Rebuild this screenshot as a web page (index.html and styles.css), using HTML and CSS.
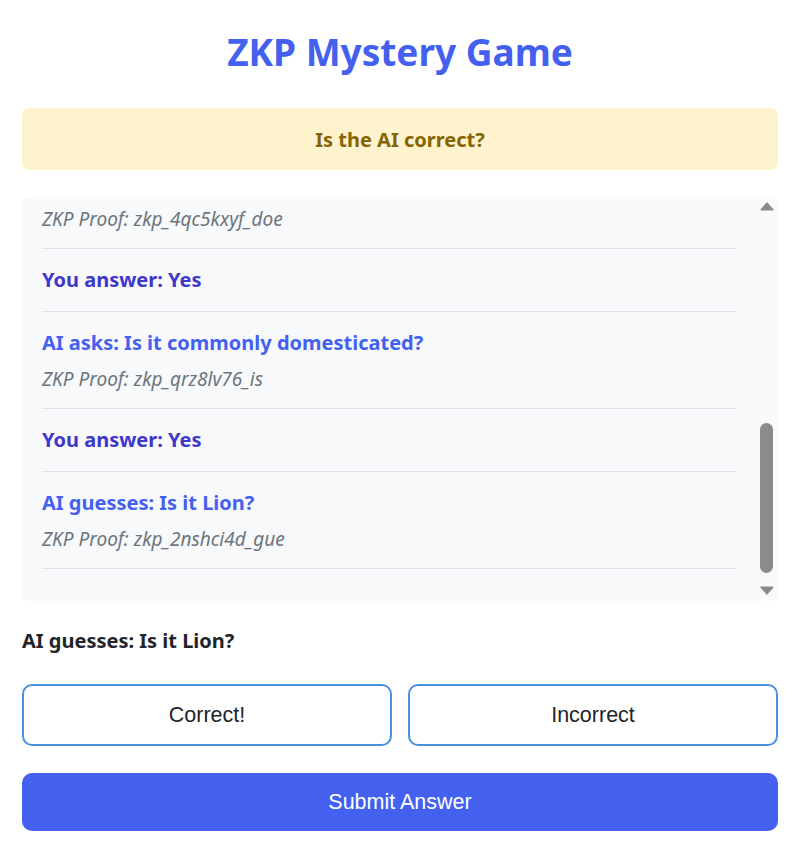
FILE: index.html
```html
<!DOCTYPE html>
<html lang="en">
<head>
<meta charset="utf-8">
<title>ZKP Mystery Game</title>
<link rel="stylesheet" href="styles.css">
</head>
<body>
<div class="app">
  <h1 class="title">ZKP Mystery Game</h1>
  <div class="status">Is the AI correct?</div>
  <div class="log">
    <div class="log-content">
      <div class="msg ai partial">
        <div class="proof">ZKP Proof: zkp_4qc5kxyf_doe</div>
      </div>
      <div class="msg you"><div class="msg-text">You answer: Yes</div></div>
      <div class="msg ai">
        <div class="msg-text">AI asks: Is it commonly domesticated?</div>
        <div class="proof">ZKP Proof: zkp_qrz8lv76_is</div>
      </div>
      <div class="msg you"><div class="msg-text">You answer: Yes</div></div>
      <div class="msg ai">
        <div class="msg-text">AI guesses: Is it Lion?</div>
        <div class="proof">ZKP Proof: zkp_2nshci4d_gue</div>
      </div>
    </div>
    <div class="scrollbar" aria-hidden="true">
      <div class="sb-btn sb-up">
        <svg width="14" height="9" viewBox="0 0 14 9"><path d="M7 1.2 L12.8 7.8 L1.2 7.8 Z" fill="#8b8b8b" stroke="#8b8b8b" stroke-width="1.6" stroke-linejoin="round"/></svg>
      </div>
      <div class="sb-track"><div class="sb-thumb"></div></div>
      <div class="sb-btn sb-down">
        <svg width="14" height="9" viewBox="0 0 14 9"><path d="M1.2 1.2 L12.8 1.2 L7 7.8 Z" fill="#8b8b8b" stroke="#8b8b8b" stroke-width="1.6" stroke-linejoin="round"/></svg>
      </div>
    </div>
  </div>
  <div class="current">AI guesses: Is it Lion?</div>
  <div class="choices">
    <button class="choice">Correct!</button>
    <button class="choice">Incorrect</button>
  </div>
  <button class="submit">Submit Answer</button>
</div>
</body>
</html>
```

FILE: styles.css
```css
* { box-sizing: border-box; }
html, body { margin: 0; padding: 0; background: #ffffff; }
body { font-family: "Noto Sans", "Open Sans", sans-serif; color: #212529; }
.app { padding: 28px 12px 0 22px; display: flex; flex-direction: column; }
.title {
  margin: 0;
  text-align: center;
  font-size: 37px;
  line-height: 48px;
  font-weight: 700;
  color: #4361ee;
}
.status {
  margin-top: 32px;
  height: 62px;
  display: flex;
  align-items: center;
  justify-content: center;
  background: #fff3cd;
  color: #856404;
  border-radius: 8px;
  font-size: 20px;
  font-weight: 700;
}
.log {
  margin-top: 27px;
  height: 404px;
  background: #f8f9fa;
  border-radius: 8px;
  overflow: hidden;
  display: flex;
}
.log-content {
  flex: 1;
  padding: 0 20px;
  min-width: 0;
}
.msg {
  padding: 16px 0;
  border-bottom: 1px solid #dee2e6;
}
.msg.partial { padding-top: 9px; }
.msg-text {
  font-size: 20px;
  line-height: 30px;
  font-weight: 700;
}
.ai .msg-text { color: #4361ee; }
.you .msg-text { color: #3f37c9; }
.proof {
  margin-top: 8px;
  font-size: 19px;
  line-height: 26px;
  font-style: italic;
  color: #6c757d;
}
.partial .proof { margin-top: 0; }
.scrollbar {
  width: 23px;
  background: #fafafa;
  display: flex;
  flex-direction: column;
}
.sb-btn {
  display: flex;
  align-items: center;
  justify-content: center;
}
.sb-up { height: 17px; padding-top: 1px; }
.sb-down { height: 22px; }
.sb-track {
  flex: 1;
  display: flex;
  flex-direction: column;
  justify-content: flex-end;
  align-items: center;
  padding-bottom: 6px;
}
.sb-thumb {
  width: 13px;
  height: 150px;
  border-radius: 7px;
  background: #8b8b8b;
}
.current {
  margin-top: 27px;
  font-size: 20px;
  line-height: 26px;
  font-weight: 700;
  color: #212529;
}
.choices {
  margin-top: 30px;
  display: grid;
  grid-template-columns: 1fr 1fr;
  gap: 16px;
}
.choice {
  height: 62px;
  background: #ffffff;
  border: 2px solid #4a90e2;
  border-radius: 10px;
  font-family: "Liberation Sans", Arial, sans-serif;
  font-size: 21.5px;
  color: #212529;
}
.submit {
  margin-top: 27px;
  height: 58px;
  background: #4361ee;
  border: none;
  border-radius: 10px;
  color: #ffffff;
  font-family: "Liberation Sans", Arial, sans-serif;
  font-size: 21.5px;
}
```
